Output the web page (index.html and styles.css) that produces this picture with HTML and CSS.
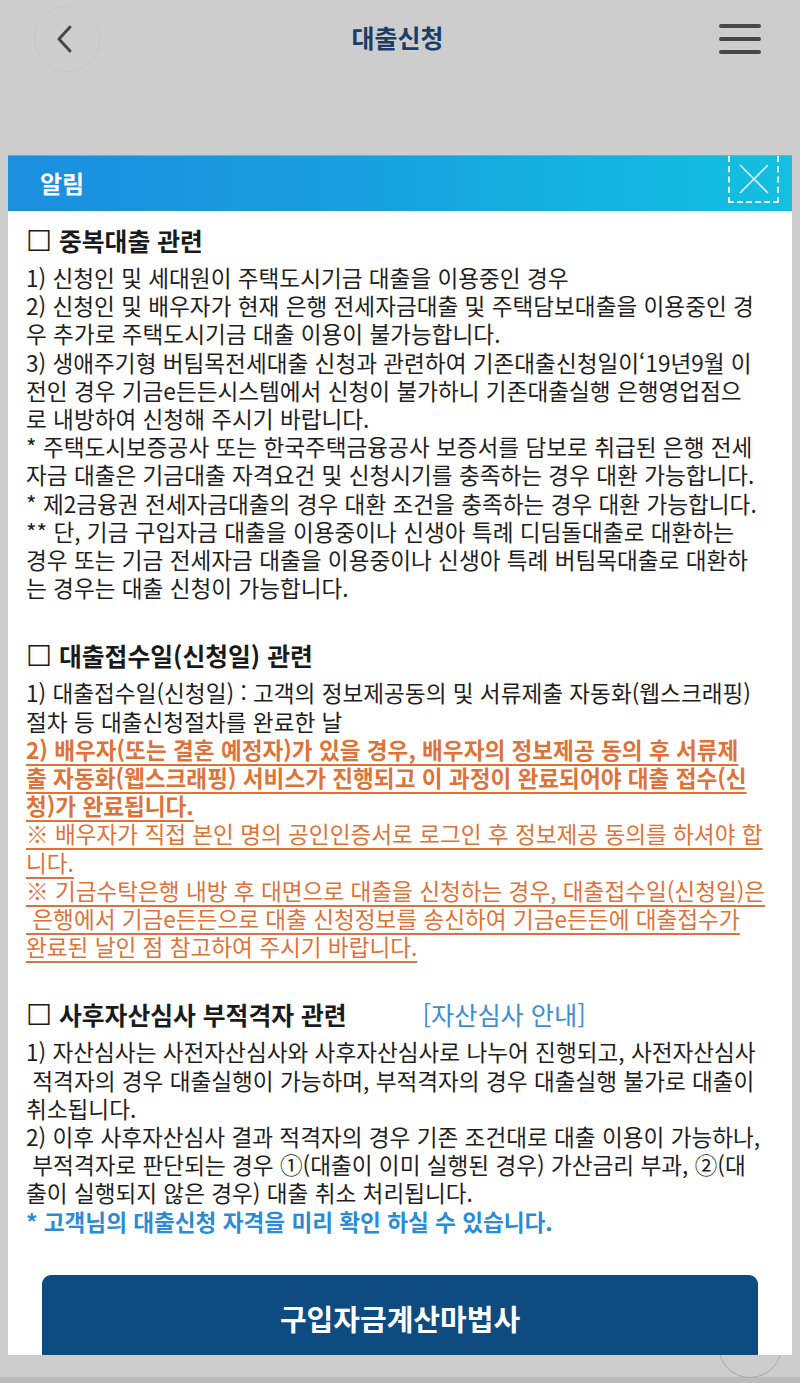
FILE: index.html
```html
<!DOCTYPE html>
<html lang="ko">
<head>
<meta charset="utf-8">
<title>대출신청</title>
<link rel="stylesheet" href="styles.css">
</head>
<body>
<div class="page">
  <header class="topbar">
    <div class="side">
      <button class="back" aria-label="뒤로">
        <svg width="20" height="30" viewBox="0 0 20 30"><polyline points="15,3 4,15 15,27" fill="none" stroke="#474747" stroke-width="3" stroke-linecap="round" stroke-linejoin="round"/></svg>
      </button>
    </div>
    <h1 class="title">대출신청</h1>
    <div class="side side-right">
      <button class="menu" aria-label="메뉴">
        <span></span><span></span><span></span>
      </button>
    </div>
  </header>

  <div class="fab"></div>

  <section class="modal">
    <div class="modal-head">
      <span class="modal-title">알림</span>
      <button class="close" aria-label="닫기">
        <svg width="32" height="32" viewBox="0 0 32 32"><path d="M2 2 L30 30 M30 2 L2 30" stroke="#d6eef7" stroke-width="1.6" fill="none"/></svg>
      </button>
    </div>
    <div class="modal-body">
      <div class="sec">
        <h2 class="sec-title"><span class="box">☐</span> 중복대출 관련</h2>
        <p class="txt">1) 신청인 및 세대원이 주택도시기금 대출을 이용중인 경우<br>2) 신청인 및 배우자가 현재 은행 전세자금대출 및 주택담보대출을 이용중인 경<br>우 추가로 주택도시기금 대출 이용이 불가능합니다.<br>3) 생애주기형 버팀목전세대출 신청과 관련하여 기존대출신청일이‘19년9월 이<br>전인 경우 기금e든든시스템에서 신청이 불가하니 기존대출실행 은행영업점으<br>로 내방하여 신청해 주시기 바랍니다.<br>* 주택도시보증공사 또는 한국주택금융공사 보증서를 담보로 취급된 은행 전세<br>자금 대출은 기금대출 자격요건 및 신청시기를 충족하는 경우 대환 가능합니다.<br>* 제2금융권 전세자금대출의 경우 대환 조건을 충족하는 경우 대환 가능합니다.<br>** 단, 기금 구입자금 대출을 이용중이나 신생아 특례 디딤돌대출로 대환하는<br>경우 또는 기금 전세자금 대출을 이용중이나 신생아 특례 버팀목대출로 대환하<br>는 경우는 대출 신청이 가능합니다.</p>
      </div>

      <div class="sec">
        <h2 class="sec-title"><span class="box">☐</span> 대출접수일(신청일) 관련</h2>
        <p class="txt">1) 대출접수일(신청일) : 고객의 정보제공동의 및 서류제출 자동화(웹스크래핑)<br>절차 등 대출신청절차를 완료한 날<br><span class="warn strong">2) 배우자(또는 결혼 예정자)가 있을 경우, 배우자의 정보제공 동의 후 서류제<br>출 자동화(웹스크래핑) 서비스가 진행되고 이 과정이 완료되어야 대출 접수(신<br>청)가 완료됩니다.</span><br><span class="warn">※ 배우자가 직접 본인 명의 공인인증서로 로그인 후 정보제공 동의를 하셔야 합<br>니다.</span><br><span class="warn">※ 기금수탁은행 내방 후 대면으로 대출을 신청하는 경우, 대출접수일(신청일)은<br>&nbsp;은행에서 기금e든든으로 대출 신청정보를 송신하여 기금e든든에 대출접수가<br>완료된 날인 점 참고하여 주시기 바랍니다.</span></p>
      </div>

      <div class="sec">
        <h2 class="sec-title"><span class="box">☐</span> 사후자산심사 부적격자 관련 <a class="guide" href="#">[자산심사 안내]</a></h2>
        <p class="txt">1) 자산심사는 사전자산심사와 사후자산심사로 나누어 진행되고, 사전자산심사<br>&nbsp;적격자의 경우 대출실행이 가능하며, 부적격자의 경우 대출실행 불가로 대출이<br>취소됩니다.<br>2) 이후 사후자산심사 결과 적격자의 경우 기존 조건대로 대출 이용이 가능하나,<br>&nbsp;부적격자로 판단되는 경우 ①(대출이 이미 실행된 경우) 가산금리 부과, ②(대<br>출이 실행되지 않은 경우) 대출 취소 처리됩니다.<br><strong class="note">* 고객님의 대출신청 자격을 미리 확인 하실 수 있습니다.</strong></p>
      </div>

      <button class="calc">구입자금계산마법사</button>
    </div>
  </section>

  <div class="bottom-band"></div>
</div>
</body>
</html>
```

FILE: styles.css
```css
* { box-sizing: border-box; }

html, body {
  margin: 0;
  padding: 0;
}

body {
  background: #cdcdcd;
  font-family: "Noto Sans CJK KR", "Noto Sans", "DejaVu Sans", sans-serif;
  color: #1e1e1e;
}

.page {
  position: relative;
  width: 800px;
  height: 1383px;
  overflow: hidden;
  background: #cdcdcd;
  display: flex;
  flex-direction: column;
}

.topbar {
  height: 78px;
  display: grid;
  grid-template-columns: 1fr auto 1fr;
  align-items: center;
  padding: 0 39px 0 34px;
}

.side {
  display: flex;
  align-items: center;
}

.side-right {
  justify-content: flex-end;
}

.back {
  width: 66px;
  height: 66px;
  border-radius: 50%;
  border: 1px solid rgba(0, 0, 0, 0.035);
  background: transparent;
  display: flex;
  align-items: center;
  justify-content: center;
  padding: 0 4px 0 0;
}

.title {
  margin: 0 0 3px 0;
  font-size: 25px;
  font-weight: 700;
  color: #1c3d68;
  line-height: 1;
}

.menu {
  width: 42px;
  height: 30px;
  border: 0;
  padding: 0;
  background: transparent;
  display: flex;
  flex-direction: column;
  justify-content: space-between;
}

.menu span {
  display: block;
  height: 4px;
  border-radius: 2px;
  background: #474747;
}

.fab {
  position: absolute;
  left: 718px;
  top: 1314px;
  width: 64px;
  height: 64px;
  border-radius: 50%;
  border: 1.5px solid #a9a9a9;
  z-index: 0;
}

.modal {
  position: relative;
  z-index: 1;
  margin: 77px 8px 0 8px;
  background: #fff;
}

.modal-head {
  height: 56px;
  display: flex;
  align-items: center;
  justify-content: space-between;
  padding: 0 13px 0 32px;
  background: linear-gradient(90deg, #1b8ede 0%, #199fdf 45%, #13b4df 75%, #14bfe0 100%);
  border-top: 1px solid #5ab6ea;
}

.modal-title {
  color: #fff;
  font-size: 24px;
  font-weight: 700;
  margin-bottom: 2px;
}

.close {
  align-self: flex-start;
  width: 51px;
  height: 47px;
  border: 2px dashed rgba(255, 255, 255, 0.9);
  border-top: 0;
  background: transparent;
  display: flex;
  align-items: center;
  justify-content: center;
  padding: 0;
}

.modal-body {
  height: 1144px;
  overflow: hidden;
  padding: 14px 0 0 18px;
}

.sec {
  margin-bottom: 38px;
}

.sec-title {
  margin: 0 0 8px 0;
  font-size: 24.8px;
  font-weight: 700;
  line-height: 30px;
  color: #1a1a1a;
  white-space: nowrap;
}

.box {
  font-family: "DejaVu Sans", sans-serif;
  font-weight: 400;
  font-size: 29px;
  line-height: 30px;
}

.guide {
  margin-left: 69px;
  font-weight: 400;
  font-size: 25.2px;
  color: #3a8fd6;
  text-decoration: none;
}

.txt {
  margin: 0;
  font-size: 22.6px;
  line-height: 28.2px;
  white-space: nowrap;
  color: #1e1e1e;
}

.warn {
  color: #df7236;
  text-decoration: underline;
  text-decoration-thickness: 1.5px;
  text-underline-offset: 5px;
}

.warn.strong {
  font-weight: 700;
}

.note {
  font-weight: 700;
  color: #2a8bd6;
}

.calc {
  display: block;
  width: 716px;
  height: 90px;
  margin: 39px 0 0 16px;
  border: 0;
  border-radius: 9px 9px 0 0;
  background: #0d4b81;
  color: #fff;
  font-family: "Noto Sans CJK KR", sans-serif;
  font-size: 29px;
  font-weight: 700;
  padding: 0 0 4px 0;
  text-align: center;
}

.bottom-band {
  margin-top: auto;
  height: 6px;
  background: #bcbcbc;
}
```
